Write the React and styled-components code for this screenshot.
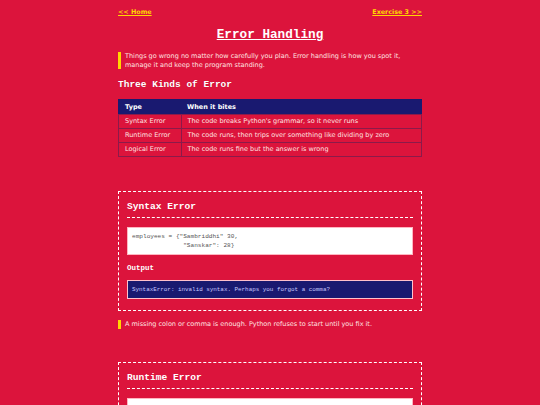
import React from 'react';
import styled, { createGlobalStyle } from 'styled-components';

const GlobalStyle = createGlobalStyle`
  html, body {
    margin: 0;
    padding: 0;
    background: #dc143c;
  }
  body {
    font-family: "DejaVu Sans", Verdana, sans-serif;
    color: #ffe4e1;
  }
`;

const Page = styled.div`
  width: 304px;
  margin: 0 auto;
  padding-top: 8px;
`;

const Nav = styled.nav`
  display: flex;
  justify-content: space-between;
  font-size: 6.4px;
  font-weight: bold;
  line-height: 9px;
`;

const NavLink = styled.a`
  color: #ffd700;
  text-decoration: underline;
`;

const Title = styled.h1`
  font-family: "Liberation Mono", "Courier New", monospace;
  font-size: 12.7px;
  font-weight: bold;
  color: #fff;
  text-align: center;
  text-decoration: underline;
  margin: 10px 0 9px;
  line-height: 16px;
`;

const Callout = styled.p`
  border-left: 3px solid #ffd700;
  padding-left: 4px;
  margin: 0;
  font-size: 6.5px;
  line-height: 8.5px;
  color: #ffe4e1;
`;

const Heading = styled.h2`
  font-family: "Liberation Mono", "Courier New", monospace;
  font-size: 9.5px;
  font-weight: bold;
  color: #fff;
  text-shadow: 0 0 1px #b0102e;
  margin: 10px 0 8px;
  line-height: 12px;
`;

const Table = styled.table`
  width: 100%;
  border-collapse: collapse;
  border: 1.5px solid #191970;
  font-size: 6.5px;
  line-height: 7px;
`;

const Th = styled.th`
  background: #191970;
  color: #fff;
  text-align: left;
  font-weight: bold;
  padding: 4px 6px 3px;
  width: ${p => p.$w || 'auto'};
`;

const Td = styled.td`
  border: 1px solid #8b1a4a;
  padding: 3px 6px;
  color: #ffe4e1;
`;

const Section = styled.section`
  border: 1px dashed #fff;
  padding: 0 8px 11px;
  margin-top: ${p => p.$top || '34px'};
`;

const SectionTitle = styled.h3`
  font-family: "Liberation Mono", "Courier New", monospace;
  font-size: 9.6px;
  font-weight: bold;
  color: #fff;
  margin: 9px 0 9px;
  padding-bottom: 4px;
  line-height: 12px;
  border-bottom: 1px dashed #fff;
`;

const Code = styled.pre`
  background: #fff;
  border: 1px solid #ffb6c1;
  color: #555;
  font-family: "Liberation Mono", "Courier New", monospace;
  font-size: 6.1px;
  line-height: 9px;
  padding: 4px;
  margin: 0;
  white-space: pre;
`;

const Label = styled.h4`
  font-family: "Liberation Mono", "Courier New", monospace;
  font-size: 7.5px;
  font-weight: bold;
  color: #fff;
  margin: 8px 0 7px;
  line-height: 10px;
`;

const Output = styled.pre`
  background: #191970;
  border: 1px solid #ffc0cb;
  color: #c8c8ff;
  font-family: "Liberation Mono", "Courier New", monospace;
  font-size: 5.9px;
  line-height: 9px;
  padding: 4px;
  margin: 0;
`;

const Note = styled(Callout)`
  margin-top: 9px;
`;

const errors = [
  ['Syntax Error', "The code breaks Python's grammar, so it never runs"],
  ['Runtime Error', 'The code runs, then trips over something like dividing by zero'],
  ['Logical Error', 'The code runs fine but the answer is wrong'],
];

const App = () => {
  return (
    <>
      <GlobalStyle />
      <Page>
        <Nav>
          <NavLink href="#">&lt;&lt; Home</NavLink>
          <NavLink href="#">Exercise 3 &gt;&gt;</NavLink>
        </Nav>
        <Title>Error Handling</Title>
        <Callout>
          Things go wrong no matter how carefully you plan. Error handling is how you spot it,
          manage it and keep the program standing.
        </Callout>
        <Heading>Three Kinds of Error</Heading>
        <Table>
          <thead>
            <tr>
              <Th $w="50px">Type</Th>
              <Th>When it bites</Th>
            </tr>
          </thead>
          <tbody>
            {errors.map(([type, desc]) => (
              <tr key={type}>
                <Td>{type}</Td>
                <Td>{desc}</Td>
              </tr>
            ))}
          </tbody>
        </Table>

        <Section>
          <SectionTitle>Syntax Error</SectionTitle>
          <Code>{`employees = {"Sambriddhi" 30,
              "Sanskar": 28}`}</Code>
          <Label>Output</Label>
          <Output>SyntaxError: invalid syntax. Perhaps you forgot a comma?</Output>
        </Section>
        <Note>A missing colon or comma is enough. Python refuses to start until you fix it.</Note>

        <Section $top="33px">
          <SectionTitle>Runtime Error</SectionTitle>
          <Code>{`numerator = int(input("Enter numerator: "))
denominator = int(input("Enter denominator: "))
print(numerator / denominator)`}</Code>
          <Label>Output</Label>
          <Output>ZeroDivisionError: division by zero</Output>
        </Section>
      </Page>
    </>
  );
};

export default App;
